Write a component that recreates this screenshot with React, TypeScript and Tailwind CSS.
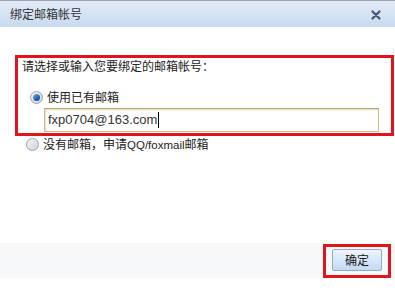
import React from "react";

const cjk = "font-['SimSun','Noto_Sans_CJK_SC',sans-serif]";

function Radio({ checked }: { checked?: boolean }) {
  return (
    <span className="relative flex h-[13px] w-[13px] shrink-0 items-center justify-center rounded-full border border-[#9aa3ad] bg-gradient-to-br from-[#f4f4f4] to-[#cfd3d8]">
      {checked && (
        <span className="h-[7px] w-[7px] rounded-full bg-gradient-to-br from-[#7fb2e8] via-[#2d6fbf] to-[#0f3f86]" />
      )}
    </span>
  );
}

export default function App() {
  return (
    <div className={`flex h-[307px] w-[395px] flex-col bg-white text-[12px] text-[#222] ${cjk}`}>
      {/* title bar */}
      <div className="flex h-[27px] shrink-0 items-center justify-between border-t border-[#9ea4ab] bg-gradient-to-b from-[#e3ecf7] to-[#c8daef] pl-[10px] pr-[14px]">
        <span className="text-[12px] leading-none text-[#333]">绑定邮箱帐号</span>
        <svg width="10" height="10" viewBox="0 0 10 10" className="mt-[1px]">
          <path d="M1.5 1.5 L8.5 8.5 M8.5 1.5 L1.5 8.5" stroke="#3f5675" strokeWidth="2.2" strokeLinecap="round" />
        </svg>
      </div>

      {/* body */}
      <div className="ml-[15px] mr-[1px] mt-[28px] border-[3px] border-[#e0141c] pb-[1px] pl-[4px]">
        <div className="h-[16px] leading-[16px]">请选择或输入您要绑定的邮箱帐号：</div>
        <div className="mt-[15px] flex h-[16px] items-center gap-[4px] pl-[8px]">
          <Radio checked />
          <span className="leading-[16px]">使用已有邮箱</span>
        </div>
        <div className="ml-[22px] mt-[3px] flex h-[24px] w-[335px] items-center border border-[#cdbb8a] border-t-[#b9a674] bg-white pl-[3px] shadow-[inset_1px_1px_2px_rgba(160,140,90,0.35)]">
          <span className="font-['Liberation_Sans',Arial,sans-serif] text-[13px] text-[#333]">fxp0704@163.com</span>
          <span className="ml-[1px] h-[16px] w-px bg-black" />
        </div>
      </div>
      <div className="ml-[26px] flex h-[16px] items-center gap-[4px]">
        <Radio />
        <span className="leading-[16px]">
          没有邮箱，申请
          <span className="font-['Liberation_Sans',Arial,sans-serif] text-[11.5px]">QQ/foxmail</span>
          邮箱
        </span>
      </div>

      {/* footer */}
      <div className="mt-[91px] flex h-[35px] shrink-0 justify-end bg-[#f7f8fa] pr-[4px] pt-[1px]">
        <div className="flex h-[34px] w-[68px] items-start justify-center border-[3px] border-[#e0141c] pt-[2px]">
          <button className="flex h-[22px] w-[50px] items-center justify-center rounded-[2px] border border-[#92abc9] bg-gradient-to-b from-[#eef5fd] to-[#c3d9f4] text-[12px] text-[#1a1a1a]">
            确定
          </button>
        </div>
      </div>
    </div>
  );
}
